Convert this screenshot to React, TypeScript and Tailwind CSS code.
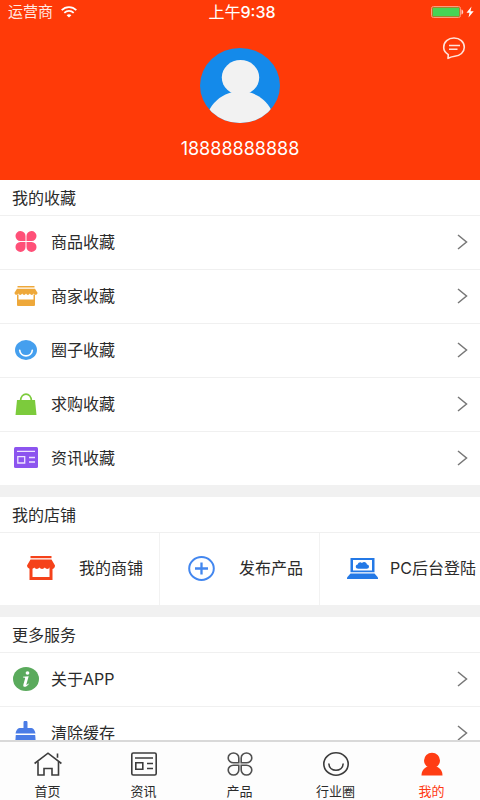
import type { ReactNode } from "react";

export default function App() {
  return (
    <div className="flex h-dvh flex-col overflow-hidden bg-white font-['Inter','Noto_Sans_CJK_SC',sans-serif] text-base text-[#2b2b2b]">
      <main className="min-h-0 grow overflow-y-auto [scrollbar-width:none]">
        <ProfileHeader />
        <Section title="我的收藏">
          <MenuRow icon={<CloverIcon />} label="商品收藏" />
          <MenuRow icon={<StallIcon />} label="商家收藏" />
          <MenuRow icon={<CircleIcon />} label="圈子收藏" />
          <MenuRow icon={<BagIcon />} label="求购收藏" />
          <MenuRow icon={<NewsIcon />} label="资讯收藏" />
        </Section>
        <Section title="我的店铺">
          <div className="grid h-[72px] grid-cols-3 divide-x divide-[#f2f2f2]">
            <ShopLink icon={<ShopIcon />} label="我的商铺" />
            <ShopLink icon={<PlusIcon />} label="发布产品" />
            <ShopLink icon={<LaptopIcon />} label="PC后台登陆" wide />
          </div>
        </Section>
        <Section title="更多服务">
          <MenuRow icon={<InfoIcon />} label="关于APP" />
          <MenuRow icon={<BrushIcon />} label="清除缓存" />
        </Section>
      </main>
      <TabBar />
    </div>
  );
}

function ProfileHeader() {
  return (
    <header className="flex h-[180px] flex-col bg-[#ff3a08] text-white">
      <div className="grid h-6 grid-cols-3 items-center pl-2 pr-1">
        <div className="flex items-center gap-2 text-[15px] text-[#ffe9e2]">
          <span>运营商</span>
          <WifiIcon />
        </div>
        <p className="text-center">
          上午<span className="font-medium">9:38</span>
        </p>
        <div className="flex items-center justify-end">
          <BatteryIcon />
        </div>
      </div>
      <div className="grid grow grid-cols-3 items-start">
        <div className="col-start-2 flex flex-col items-center pt-6">
          <AvatarIcon />
          <p className="mt-3.5 text-lg leading-6">18888888888</p>
        </div>
        <button type="button" aria-label="消息" className="mr-3.5 mt-3 justify-self-end">
          <MessageIcon />
        </button>
      </div>
    </header>
  );
}

type SectionProps = {
  title: string;
  children: ReactNode;
};

function Section({ title, children }: SectionProps) {
  return (
    <section className="border-b-12 border-[#f1f1f1]">
      <h2 className="flex h-9 items-center border-b border-[#f0f0f0] px-3">{title}</h2>
      {children}
    </section>
  );
}

type ItemProps = {
  icon: ReactNode;
  label: string;
};

function MenuRow({ icon, label }: ItemProps) {
  return (
    <a href="#" className="flex h-[54px] items-center border-b border-[#f0f0f0] px-3 pb-0.5 last:h-[53px] last:border-b-0">
      <span className="mr-3 flex w-[27px] justify-center">{icon}</span>
      <span className="grow">{label}</span>
      <svg width="11" height="16" viewBox="0 0 11 16" fill="none" stroke="#777" strokeWidth="1.5">
        <path d="M1 1l8.5 7L1 15" />
      </svg>
    </a>
  );
}

function ShopLink({ icon, label, wide }: ItemProps & { wide?: boolean }) {
  return (
    <a href="#" className={`flex items-center justify-end whitespace-nowrap pb-0.5 ${wide ? "gap-3 pr-1" : "gap-6 pr-4"}`}>
      {icon}
      <span>{label}</span>
    </a>
  );
}

function TabBar() {
  return (
    <nav className="grid h-[60px] shrink-0 grid-cols-5 border-t-2 border-[#d9d9d9] bg-[#fdfdfd] text-[13px] leading-4">
      <Tab icon={<HomeIcon />} label="首页" />
      <Tab icon={<NewsLineIcon />} label="资讯" />
      <Tab icon={<CloverLineIcon />} label="产品" />
      <Tab icon={<CircleLineIcon />} label="行业圈" />
      <Tab icon={<UserIcon />} label="我的" active />
    </nav>
  );
}

function Tab({ icon, label, active }: ItemProps & { active?: boolean }) {
  return (
    <a href="#" className={`flex flex-col items-center gap-[7px] pr-px pt-2.5 ${active ? "text-[#ff3a14]" : "text-[#2b2b2b]"}`}>
      {icon}
      <span>{label}</span>
    </a>
  );
}

function WifiIcon() {
  return (
    <svg width="16" height="12" viewBox="0 0 16 12" fill="none" stroke="#fff" strokeWidth="1.8">
      <path d="M.7 4.2C4.8.1 11.2.1 15.3 4.2" />
      <path d="M3.3 6.8c2.7-2.5 6.7-2.5 9.4 0" />
      <path d="M5.6 9.2c1.4-1.2 3.4-1.2 4.8 0L8 11.6z" fill="#fff" stroke="none" />
    </svg>
  );
}

function BatteryIcon() {
  return (
    <svg width="45" height="14" viewBox="0 0 45 14">
      <rect x=".5" y="1.5" width="29" height="11" rx="2" fill="none" stroke="#ff9c80" />
      <rect x="1.500" y="2.500" width="27" height="9" rx=".5" fill="#47d455" />
      <path d="M30.500 4.500c2.300.6 2.300 4.400 0 5z" fill="#ffd0c2" />
      <path d="M40.500 1.500l-5 6.300h3L37.500 12.500l5.200-6.300h-3.200z" fill="#fff" />
    </svg>
  );
}

function AvatarIcon() {
  return (
    <svg width="80" height="75" viewBox="0 0 80 75">
      <clipPath id="avatar">
        <ellipse cx="40" cy="37.500" rx="40" ry="37.500" />
      </clipPath>
      <g clipPath="url(#avatar)">
        <path d="M0 0h80v75H0z" fill="#148aea" />
        <ellipse cx="40.500" cy="29.500" rx="18.700" ry="17.500" fill="#f2f2f2" />
        <path d="M9.500 61.500C15 52 23 46.500 32 44.300h17C58 46.500 66 52 71 61.500V78H9.500z" fill="#f2f2f2" />
      </g>
    </svg>
  );
}

function MessageIcon() {
  return (
    <svg width="24" height="24" viewBox="0 0 24 24" fill="none" stroke="#ffe3da" strokeWidth="1.600" strokeLinejoin="round">
      <path d="M6 22.300L6.300 18.600C3.300 16.800 1.700 14.200 1.700 11.300 1.700 6 6.200 2 12 2s10.300 4 10.300 9.300c0 5-4.300 8.500-9.500 8.900-2.800.2-4.700 1.100-6.800 2.100z" />
      <path d="M7 9.500h11M7 13.300h8.500" />
    </svg>
  );
}

function CloverIcon() {
  return (
    <svg width="22" height="21" viewBox="0 0 22 21" fill="#ff5078">
      <path d="M10.500 10H5.300A5 5 0 1 1 10.500 5z" />
      <path d="M11.500 10h5.200a5 5 0 1 0-5.200-5z" />
      <path d="M10.500 11H5.300a5 5 0 1 0 5.200 5z" />
      <path d="M11.500 11h5.200a5 5 0 1 1-5.200 5z" />
    </svg>
  );
}

function StallIcon() {
  return (
    <svg width="24" height="20" viewBox="0 0 24 20" fill="#eea83a">
      <path d="M3.500 0h17v1.500h-17z" />
      <path d="M3 2.700h18l2.500 4.100c0 2.400-3 2.700-3.800.8-.8 1.800-3.100 1.800-3.900 0-.8 1.800-3 1.800-3.800 0-.8 1.800-3 1.800-3.800 0-.8 1.800-3.100 1.800-3.900 0C3.500 9.500.5 9.200.5 6.800z" />
      <path d="M3 8.500h1.500v5h15v-5H21V19a1 1 0 0 1-1 1H4a1 1 0 0 1-1-1z" />
    </svg>
  );
}

function CircleIcon() {
  return (
    <svg width="22" height="20" viewBox="0 0 22 20">
      <ellipse cx="11" cy="10" rx="11" ry="10" fill="#459fee" />
      <path d="M4.700 10.300c.5 7.300 12.100 7.300 12.600 0" fill="none" stroke="#fff" strokeWidth="1.700" strokeLinecap="round" />
    </svg>
  );
}

function BagIcon() {
  return (
    <svg width="22" height="22" viewBox="0 0 22 22">
      <path d="M2 7h18l1.500 15H.5z" fill="#7ccb3c" />
      <path d="M5.500 8C6 -1.300 16 -1.300 16.500 8" fill="none" stroke="#7ccb3c" strokeWidth="1.700" />
    </svg>
  );
}

function NewsIcon() {
  return (
    <svg width="24" height="21" viewBox="0 0 24 21">
      <rect width="24" height="21" rx="1.500" fill="#8c54ef" />
      <path d="M3 4.300h18M15 10.500h6M15 15h6M3.800 9.700h6.900v6.300H3.800z" fill="none" stroke="#eee4ff" strokeWidth="1.300" />
    </svg>
  );
}

function ShopIcon() {
  return (
    <svg width="28" height="24" viewBox="0 0 28 24" fill="#f5421a">
      <path d="M3.500 0h21v2.200h-21z" />
      <path d="M3.500 3.500h21L28 9.500c0 3.500-3.500 4.500-5.300 2-1.300 2-3.800 1.800-4.900 0-1.300 1.900-4.200 1.900-5.400 0-1.200 1.800-3.800 2-5 0C5.500 14 0 13 0 9.500z" />
      <path d="M2.500 11.500h3v9.500h17v-9.500h3V24h-23z" />
    </svg>
  );
}

function PlusIcon() {
  return (
    <svg width="27" height="25" viewBox="0 0 27 25" fill="none" stroke="#4387ef" strokeWidth="2">
      <ellipse cx="13.500" cy="12.500" rx="12.300" ry="11.400" />
      <path d="M13.500 6.500v12M7 12.500h13" strokeWidth="2.300" />
    </svg>
  );
}

function LaptopIcon() {
  return (
    <svg width="31" height="21" viewBox="0 0 31 21" fill="#2479e6">
      <path d="M3.500 0h24v14.300h-24zM6 2v10.600h19V2z" fillRule="evenodd" />
      <path d="M11.200 10.800c-3 0-3.300-4-.5-4.300.5-2.200 3-2.700 4.200-1.500 2-1.800 4.800-.6 5 1.500 3 .3 2.700 4.300-.2 4.300z" />
      <path d="M3.500 15.500h24l3.500 4V21H0v-1.500z" />
    </svg>
  );
}

function InfoIcon() {
  return (
    <svg width="26" height="24" viewBox="0 0 26 24">
      <ellipse cx="13" cy="12" rx="13" ry="12" fill="#5aaa5c" />
      <ellipse cx="14.500" cy="6" rx="1.900" ry="1.700" fill="#fff" />
      <path d="M10 9.800l5.700-.6-2.300 8c-.2.900.5.800 2-.8l.5.500c-3.300 4-6.300 3.300-5.500.5l1.700-6c.2-.7-.5-.9-2.100-.9z" fill="#fff" />
    </svg>
  );
}

function BrushIcon() {
  return (
    <svg width="21" height="24" viewBox="0 0 21 24" fill="#4a7ce6">
      <path d="M8.500 7V1.500a1.700 1.500 0 0 1 4 0V7h4c2 0 3.500 2.500 4 5.500H.5C1 9.500 2.500 7 4.500 7z" />
      <path d="M.8 14h19.400l.8 10H0z" />
    </svg>
  );
}

function HomeIcon() {
  return (
    <svg width="28" height="24" viewBox="0 0 28 24" fill="none" stroke="#3c3c3c" strokeWidth="1.600">
      <path d="M.6 11.500L14 1.200l13.400 10.300M23.500 1.500v4.300" />
      <path d="M4 9.500V23h6v-6.500h8V23h6.500V9.500" />
    </svg>
  );
}

function NewsLineIcon() {
  return (
    <svg width="26" height="24" viewBox="0 0 26 24" fill="none" stroke="#3c3c3c" strokeWidth="1.600">
      <rect x=".8" y="1" width="24.400" height="22" rx="1.500" />
      <path d="M4 6h18M16 11.500h6M16 16.500h6M4.800 10.700h7v6.600h-7z" />
    </svg>
  );
}

function CloverLineIcon() {
  return (
    <svg width="26" height="24" viewBox="0 0 26 24" fill="none" stroke="#505050" strokeWidth="1.600">
      <path d="M11.800 10.800H6.500A5.300 4.900 0 1 1 11.800 5.900z" />
      <path d="M14.200 10.800h5.300a5.300 4.900 0 1 0-5.300-4.900z" />
      <path d="M11.800 13.200H6.500a5.300 4.900 0 1 0 5.300 4.900z" />
      <path d="M14.200 13.200h5.300a5.300 4.900 0 1 1-5.300 4.900z" />
    </svg>
  );
}

function CircleLineIcon() {
  return (
    <svg width="26" height="24" viewBox="0 0 26 24" fill="none" stroke="#3c3c3c" strokeWidth="1.600">
      <ellipse cx="13" cy="12" rx="12.200" ry="11.200" />
      <path d="M5.800 11.500c.4 9 14 9 14.400 0" />
    </svg>
  );
}

function UserIcon() {
  return (
    <svg width="22" height="24" viewBox="0 0 22 24" fill="#ff3d14">
      <ellipse cx="11" cy="8.500" rx="8" ry="7.700" />
      <path d="M7 14.500h8c4 1.200 6.500 4.500 6.500 9H.5c0-4.500 2.500-7.800 6.500-9z" />
    </svg>
  );
}
